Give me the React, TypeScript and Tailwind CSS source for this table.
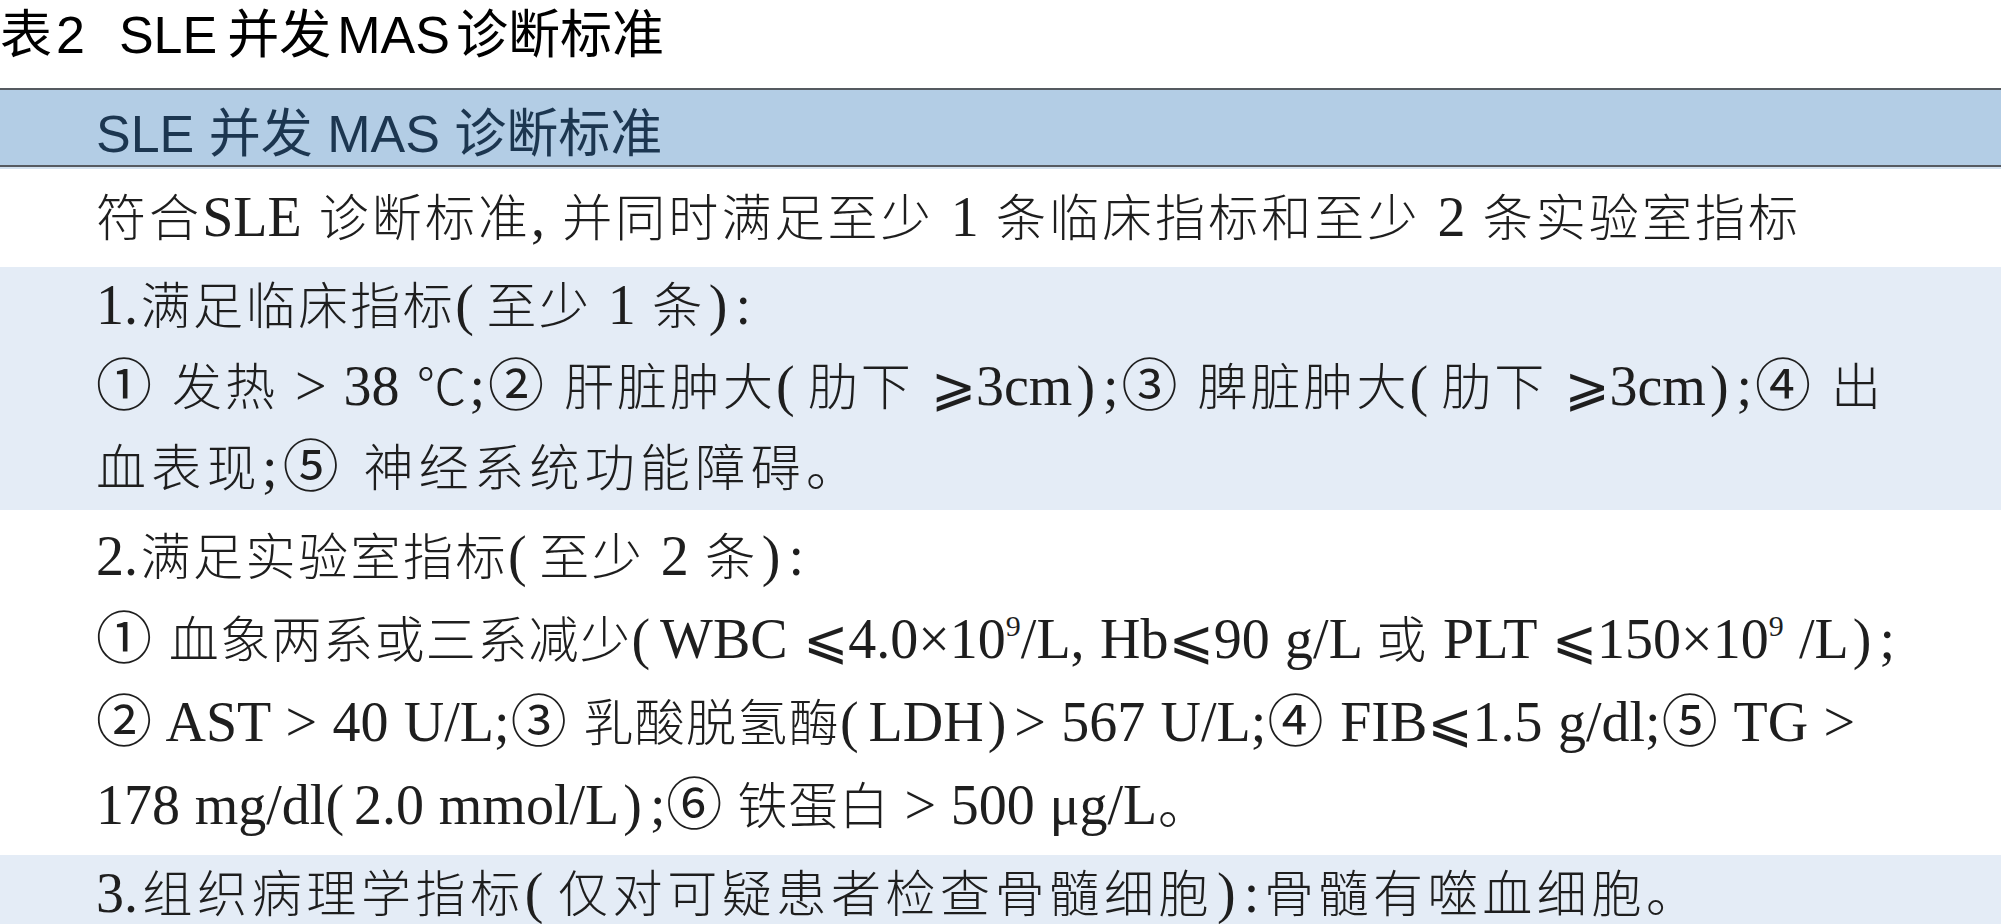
import React from 'react';

// Chinese body text at 50px, Latin runs set larger in Times (as the printed table does)
const body = "font-['Liberation_Serif','Noto_Sans_CJK_SC',serif] text-[50px] font-light";

const L = ({ children }: { children: React.ReactNode }) => (
  <span className="text-[56px] leading-none font-normal">{children}</span>
);
const LP = () => <span className="text-[56px] leading-none font-normal mr-[10px]">(</span>;
const RP = () => <span className="text-[56px] leading-none font-normal ml-[4px] mr-[8px]">)</span>;
const Sup = () => <sup className="text-[30px] leading-none -top-[22px]">9</sup>;
const Ge = () => <span className="font-['DejaVu_Sans'] text-[54px] leading-none font-normal">⩾</span>;
const Le = () => <span className="font-['DejaVu_Sans'] text-[54px] leading-none font-normal">⩽</span>;

// each printed line is justified to the width it has in the typeset table
const Line = ({ w, children }: { w: string; children: React.ReactNode }) => (
  <div className={`${w} text-justify [text-align-last:justify]`}>{children}</div>
);

export default function App() {
  return (
    <div className="w-[2001px] h-[924px] overflow-hidden bg-white text-[#1e1e1e]">
      {/* caption */}
      <div className="h-[88px] leading-[70px] text-[52px] text-black whitespace-nowrap font-['Liberation_Sans','Noto_Sans_CJK_SC',sans-serif]">
        表<span className="ml-[4px]">2</span>
        <span className="ml-[34px]">SLE</span>
        <span className="ml-[10px]">并发</span>
        <span className="ml-[6px]">MAS</span>
        <span className="ml-[6px]">诊断标准</span>
      </div>

      {/* table head */}
      <div className="h-[79px] border-t-2 border-b-2 border-[#555a60] bg-[#b3cde5] pl-[96px] pt-[14px] leading-[61px] text-[52px] text-[#1c3650] whitespace-nowrap font-['Liberation_Sans','Noto_Sans_CJK_SC',sans-serif]">
        SLE 并发 MAS 诊断标准
      </div>
      <div className="h-[2px] bg-[#d3e1ef]" />

      {/* rows */}
      <div className={`${body} pl-[96px] pt-[9px] pb-[6px] leading-[83px]`}>
        <Line w="w-[1702px]">
          符合<L>SLE </L>诊断标准<L>, </L>并同时满足至少<L> 1 </L>条临床指标和至少<L> 2 </L>条实验室指标
        </Line>
      </div>

      <div className={`${body} bg-[#e4ecf6] pl-[96px] leading-[81px]`}>
        <Line w="w-[655px]">
          <L>1.</L>满足临床指标<LP />至少<L> 1 </L>条<RP /><L>:</L>
        </Line>
        <Line w="w-[1785px]">
          <L>① </L>发热<L> &gt; 38 </L>℃<L>;② </L>肝脏肿大<LP />肋下<L> </L><Ge /><L>3cm</L><RP /><L>;③ </L>脾脏肿大<LP />肋下<L> </L><Ge /><L>3cm</L><RP /><L>;④ </L>出
        </Line>
        <Line w="w-[760px]">
          血表现<L>;⑤ </L>神经系统功能障碍。
        </Line>
      </div>

      <div className={`${body} pl-[96px] pt-[7px] pb-[6px] leading-[83px]`}>
        <Line w="w-[708px]">
          <L>2.</L>满足实验室指标<LP />至少<L> 2 </L>条<RP /><L>:</L>
        </Line>
        <Line w="w-[1799px]">
          <L>① </L>血象两系或三系减少<LP /><L>WBC </L><Le /><L>4.0×10<Sup />/L, Hb</L><Le /><L>90 g/L </L>或<L> PLT </L><Le /><L>150×10<Sup /> /L</L><RP /><L>;</L>
        </Line>
        <Line w="w-[1759px]">
          <L>② AST &gt; 40 U/L;③ </L>乳酸脱氢酶<LP /><L>LDH</L><RP /><L>&gt; 567 U/L;④ FIB</L><Le /><L>1.5 g/dl;⑤ TG &gt;</L>
        </Line>
        <Line w="w-[1112px]">
          <L>178 mg/dl</L><LP /><L>2.0 mmol/L</L><RP /><L>;⑥ </L>铁蛋白<L> &gt; 500 μg/L</L>。
        </Line>
      </div>

      <div className={`${body} bg-[#e4ecf6] pl-[96px] leading-[80px] h-[80px]`}>
        <Line w="w-[1600px]">
          <L>3.</L>组织病理学指标<LP />仅对可疑患者检查骨髓细胞<RP /><L>:</L>骨髓有噬血细胞。
        </Line>
      </div>
    </div>
  );
}
